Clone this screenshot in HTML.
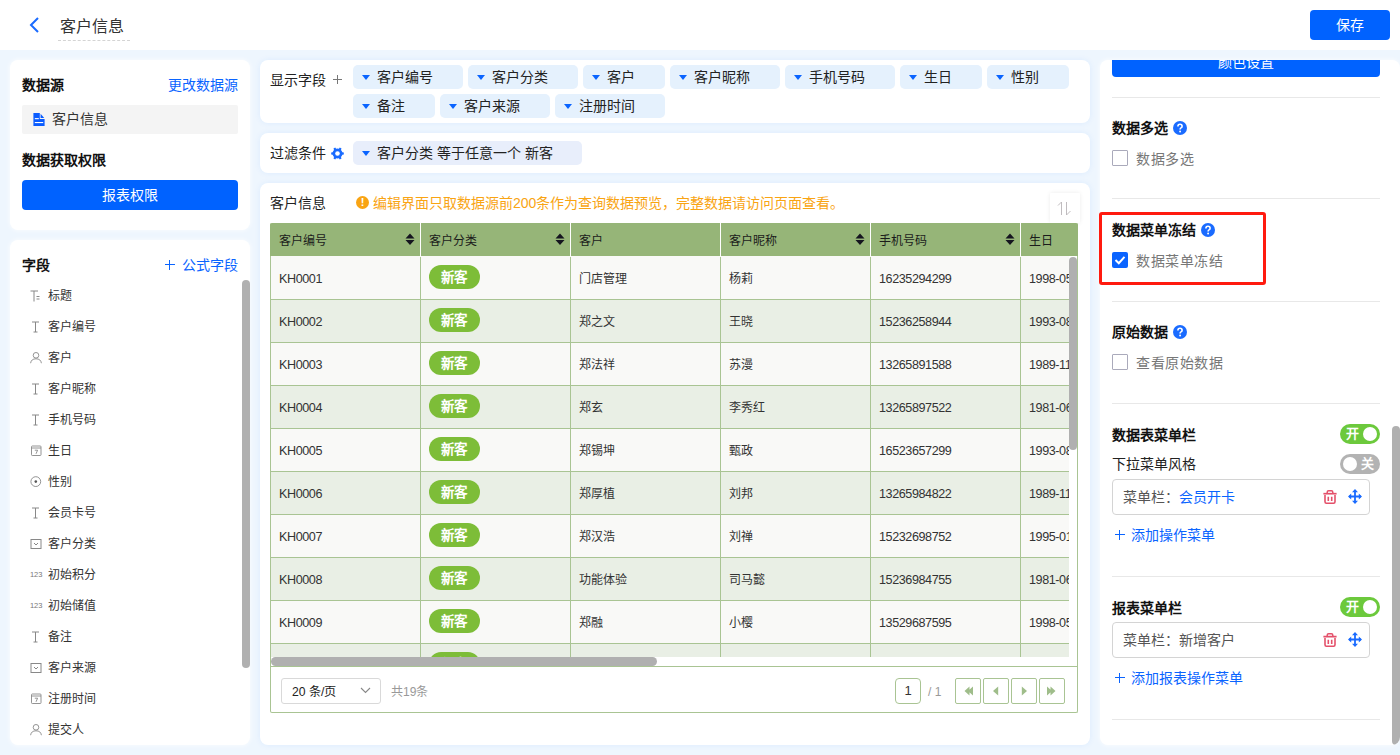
<!DOCTYPE html><html lang="zh-CN"><head><meta charset="utf-8"><style>
*{box-sizing:border-box;margin:0;padding:0}
html,body{width:1400px;height:755px;overflow:hidden}
body{font-family:"Liberation Sans",sans-serif;font-size:13px;color:#333;background:#eef6fe;position:relative}
.abs{position:absolute}
.panel{position:absolute;background:#fff;border-radius:8px;box-shadow:0 0 6px rgba(20,120,250,.08)}
.t{position:absolute;white-space:nowrap;line-height:1}
.b{font-weight:bold;color:#111}
.blue{color:#0a64ff}
.btn{position:absolute;background:#0062ff;color:#fff;border-radius:4px;text-align:center}
.ico{position:absolute}
.tag{position:absolute;height:24px;background:#e5f1fd;border-radius:5px}
.tag .tri{position:absolute;left:9px;top:10px;width:0;height:0;border-left:4.5px solid transparent;border-right:4.5px solid transparent;border-top:5px solid #0a64ff}
.tag span{position:absolute;left:24px;top:4.5px;font-size:14px;line-height:1;white-space:nowrap;color:#222}
.cell{position:absolute;white-space:nowrap;line-height:1;font-size:12px;color:#333}
.pill{position:absolute;width:51px;height:24px;border-radius:12px;background:#7dbd38;color:#fff;font-size:13.5px;font-weight:bold;text-align:center;line-height:25.5px;text-indent:-1px}
.pbtn{position:absolute;width:26px;height:26px;border:1px solid #a9c493;border-radius:2px;background:#fff}
.divr{position:absolute;left:1112px;width:268px;height:1px;background:#e6e6e6}
.cb{position:absolute;width:16px;height:16px;border:1px solid #b9bec7;border-radius:2px;background:#fff}
.qm{position:absolute;width:16px;height:16px;border-radius:50%;background:#1a6bff;color:#fff;font-size:12px;font-weight:bold;text-align:center;line-height:16px}
.tog{position:absolute;width:40px;height:20px;border-radius:10px}
.tog .k{position:absolute;top:3px;width:14px;height:14px;border-radius:50%;background:#fff}
.tog span{position:absolute;top:3px;font-size:13px;color:#fff;line-height:1;font-weight:bold}
</style></head><body>
<div class="abs" style="left:0;top:0;width:1400px;height:50px;background:#fff"></div>
<svg class="ico" style="left:27px;top:16px" width="14" height="18" viewBox="0 0 14 18"><path d="M11 2 L4 9 L11 16" fill="none" stroke="#1a6bff" stroke-width="2"/></svg>
<div class="t" style="left:60px;top:19px;font-size:16px;color:#333">客户信息</div>
<div class="abs" style="left:58px;top:40px;width:72px;border-top:1px dashed #d4d4d4"></div>
<div class="btn" style="left:1310px;top:10px;width:80px;height:30px;line-height:30px;font-size:14px">保存</div>
<div class="panel" style="left:10px;top:60px;width:240px;height:170px;box-shadow:0 0 5px rgba(255,255,255,.9)"></div>
<div class="t b" style="left:22px;top:78px;font-size:14px">数据源</div>
<div class="t blue" style="left:168px;top:78px;font-size:14px">更改数据源</div>
<div class="abs" style="left:22px;top:105px;width:216px;height:29px;background:#f4f4f4;border-radius:2px"></div>
<svg class="ico" style="left:33px;top:113px" width="12" height="13" viewBox="0 0 12 13"><path d="M0.4 0 H6.8 V5.9 H11.6 V13 H0.4 Z M7.6 0.8 L11.2 4.9 H7.6 Z" fill="#0a5cff"/><rect x="1.8" y="5.1" width="4" height="1.1" fill="#fff"/><rect x="1.8" y="9" width="8.4" height="1.1" fill="#fff"/></svg>
<div class="t" style="left:52px;top:112px;font-size:14px">客户信息</div>
<div class="t b" style="left:22px;top:153px;font-size:14px">数据获取权限</div>
<div class="btn" style="left:22px;top:180px;width:216px;height:30px;line-height:30px;font-size:14px">报表权限</div>
<div class="panel" style="left:10px;top:240px;width:240px;height:505px;box-shadow:0 0 5px rgba(255,255,255,.9)"></div>
<div class="t b" style="left:22px;top:258px;font-size:14px">字段</div>
<svg class="ico" style="left:165px;top:260px" width="10" height="10" viewBox="0 0 10 10"><path d="M4.5 0 V10 M0 4.5 H10" stroke="#0a64ff" stroke-width="1"/></svg>
<div class="t blue" style="left:182px;top:258px;font-size:14px">公式字段</div>
<div class="abs" style="left:242px;top:280px;width:8px;height:388px;background:#b0b0b0;border-radius:4px"></div>
<div class="ico" style="left:30px;top:290px;width:14px;height:12px"><svg width="12" height="12" viewBox="0 0 12 12"><path d="M0.5 1 H8 M4 1 V11.5 M6.5 6.5 H9.5 M6.5 9 H9.5" stroke="#888" stroke-width="1" fill="none"/></svg></div>
<div class="t" style="left:48px;top:289.5px;font-size:12px;color:#333">标题</div>
<div class="ico" style="left:30px;top:321px;width:14px;height:12px"><svg width="12" height="12" viewBox="0 0 12 12"><path d="M2 1 H9 M5.5 1 V11 M3.5 11 H7.5" stroke="#888" stroke-width="1" fill="none"/></svg></div>
<div class="t" style="left:48px;top:320.5px;font-size:12px;color:#333">客户编号</div>
<div class="ico" style="left:30px;top:352px;width:14px;height:12px"><svg width="12" height="12" viewBox="0 0 12 12"><circle cx="6" cy="3.3" r="2.8" stroke="#888" stroke-width="0.9" fill="none"/><path d="M0.6 11.2 Q1.2 6.8 6 6.8 Q10.8 6.8 11.4 11.2" stroke="#888" stroke-width="0.9" fill="none"/></svg></div>
<div class="t" style="left:48px;top:351.5px;font-size:12px;color:#333">客户</div>
<div class="ico" style="left:30px;top:383px;width:14px;height:12px"><svg width="12" height="12" viewBox="0 0 12 12"><path d="M2 1 H9 M5.5 1 V11 M3.5 11 H7.5" stroke="#888" stroke-width="1" fill="none"/></svg></div>
<div class="t" style="left:48px;top:382.5px;font-size:12px;color:#333">客户昵称</div>
<div class="ico" style="left:30px;top:414px;width:14px;height:12px"><svg width="12" height="12" viewBox="0 0 12 12"><path d="M2 1 H9 M5.5 1 V11 M3.5 11 H7.5" stroke="#888" stroke-width="1" fill="none"/></svg></div>
<div class="t" style="left:48px;top:413.5px;font-size:12px;color:#333">手机号码</div>
<div class="ico" style="left:30px;top:445px;width:14px;height:12px"><svg width="12" height="12" viewBox="0 0 12 12"><rect x="1.5" y="1" width="9.5" height="9.5" rx="0.8" stroke="#888" stroke-width="0.9" fill="none"/><path d="M1.5 3 H11 M4.8 5.2 H7.6 L6 8.8" stroke="#888" stroke-width="0.9" fill="none"/></svg></div>
<div class="t" style="left:48px;top:444.5px;font-size:12px;color:#333">生日</div>
<div class="ico" style="left:30px;top:476px;width:14px;height:12px"><svg width="12" height="12" viewBox="0 0 12 12"><circle cx="5.8" cy="5.6" r="4.9" stroke="#888" stroke-width="0.9" fill="none"/><circle cx="5.8" cy="5.6" r="1.3" fill="#555"/></svg></div>
<div class="t" style="left:48px;top:475.5px;font-size:12px;color:#333">性别</div>
<div class="ico" style="left:30px;top:507px;width:14px;height:12px"><svg width="12" height="12" viewBox="0 0 12 12"><path d="M2 1 H9 M5.5 1 V11 M3.5 11 H7.5" stroke="#888" stroke-width="1" fill="none"/></svg></div>
<div class="t" style="left:48px;top:506.5px;font-size:12px;color:#333">会员卡号</div>
<div class="ico" style="left:30px;top:538px;width:14px;height:12px"><svg width="12" height="12" viewBox="0 0 12 12"><rect x="1" y="1.5" width="10" height="9" stroke="#888" fill="none"/><path d="M4 5 L6 7 L8 5" stroke="#888" fill="none"/></svg></div>
<div class="t" style="left:48px;top:537.5px;font-size:12px;color:#333">客户分类</div>
<div class="ico" style="left:30px;top:569px;width:14px;height:12px"><div style="font-size:7.5px;color:#777;line-height:12px;letter-spacing:-0.1px">123</div></div>
<div class="t" style="left:48px;top:568.5px;font-size:12px;color:#333">初始积分</div>
<div class="ico" style="left:30px;top:600px;width:14px;height:12px"><div style="font-size:7.5px;color:#777;line-height:12px;letter-spacing:-0.1px">123</div></div>
<div class="t" style="left:48px;top:599.5px;font-size:12px;color:#333">初始储值</div>
<div class="ico" style="left:30px;top:631px;width:14px;height:12px"><svg width="12" height="12" viewBox="0 0 12 12"><path d="M2 1 H9 M5.5 1 V11 M3.5 11 H7.5" stroke="#888" stroke-width="1" fill="none"/></svg></div>
<div class="t" style="left:48px;top:630.5px;font-size:12px;color:#333">备注</div>
<div class="ico" style="left:30px;top:662px;width:14px;height:12px"><svg width="12" height="12" viewBox="0 0 12 12"><rect x="1" y="1.5" width="10" height="9" stroke="#888" fill="none"/><path d="M4 5 L6 7 L8 5" stroke="#888" fill="none"/></svg></div>
<div class="t" style="left:48px;top:661.5px;font-size:12px;color:#333">客户来源</div>
<div class="ico" style="left:30px;top:693px;width:14px;height:12px"><svg width="12" height="12" viewBox="0 0 12 12"><rect x="1.5" y="1" width="9.5" height="9.5" rx="0.8" stroke="#888" stroke-width="0.9" fill="none"/><path d="M1.5 3 H11 M4.8 5.2 H7.6 L6 8.8" stroke="#888" stroke-width="0.9" fill="none"/></svg></div>
<div class="t" style="left:48px;top:692.5px;font-size:12px;color:#333">注册时间</div>
<div class="ico" style="left:30px;top:724px;width:14px;height:12px"><svg width="12" height="12" viewBox="0 0 12 12"><circle cx="6" cy="3.3" r="2.8" stroke="#888" stroke-width="0.9" fill="none"/><path d="M0.6 11.2 Q1.2 6.8 6 6.8 Q10.8 6.8 11.4 11.2" stroke="#888" stroke-width="0.9" fill="none"/></svg></div>
<div class="t" style="left:48px;top:723.5px;font-size:12px;color:#333">提交人</div>
<div class="panel" style="left:260px;top:60px;width:830px;height:63px"></div>
<div class="panel" style="left:260px;top:133px;width:830px;height:40px"></div>
<div class="panel" style="left:260px;top:183px;width:830px;height:562px"></div>
<div class="t" style="left:270px;top:73px;font-size:14px;color:#222">显示字段</div>
<svg class="ico" style="left:333px;top:75px" width="9" height="9" viewBox="0 0 9 9"><path d="M4.5 0 V9 M0 4.5 H9" stroke="#777" stroke-width="1"/></svg>
<div class="tag" style="left:353px;top:65px;width:110px"><i class="tri"></i><span>客户编号</span></div>
<div class="tag" style="left:468px;top:65px;width:110px"><i class="tri"></i><span>客户分类</span></div>
<div class="tag" style="left:583px;top:65px;width:82px"><i class="tri"></i><span>客户</span></div>
<div class="tag" style="left:670px;top:65px;width:110px"><i class="tri"></i><span>客户昵称</span></div>
<div class="tag" style="left:785px;top:65px;width:110px"><i class="tri"></i><span>手机号码</span></div>
<div class="tag" style="left:900px;top:65px;width:82px"><i class="tri"></i><span>生日</span></div>
<div class="tag" style="left:987px;top:65px;width:82px"><i class="tri"></i><span>性别</span></div>
<div class="tag" style="left:353px;top:94px;width:82px"><i class="tri"></i><span>备注</span></div>
<div class="tag" style="left:440px;top:94px;width:110px"><i class="tri"></i><span>客户来源</span></div>
<div class="tag" style="left:555px;top:94px;width:110px"><i class="tri"></i><span>注册时间</span></div>
<div class="t" style="left:270px;top:146px;font-size:14px;color:#222">过滤条件</div>
<svg class="ico" style="left:331px;top:147px" width="13" height="13" viewBox="0 0 13 13"><path d="M10.74 4.05 L11.35 5.29 L12.82 5.50 L12.82 7.50 L11.35 7.71 L10.74 8.95 L9.97 10.10 L10.53 11.47 L8.79 12.47 L7.88 11.31 L6.50 11.40 L5.12 11.31 L4.21 12.47 L2.47 11.47 L3.03 10.10 L2.26 8.95 L1.65 7.71 L0.18 7.50 L0.18 5.50 L1.65 5.29 L2.26 4.05 L3.03 2.90 L2.47 1.53 L4.21 0.53 L5.12 1.69 L6.50 1.60 L7.88 1.69 L8.79 0.53 L10.53 1.53 L9.97 2.90 Z" fill="#1a6bff"/><circle cx="6.5" cy="6.5" r="2.3" fill="#fff"/></svg>
<div class="tag" style="left:353px;top:141px;width:229px;background:#e8eefb"><i class="tri"></i><span>客户分类 等于任意一个 新客</span></div>
<div class="t" style="left:270px;top:196px;font-size:14px;color:#222">客户信息</div>
<div class="abs" style="left:356px;top:196px;width:13px;height:13px;border-radius:50%;background:#f9a413;color:#fff;font-size:11px;font-weight:bold;text-align:center;line-height:13px">!</div>
<div class="t" style="left:373px;top:196px;font-size:14px;color:#f9a413;letter-spacing:0px">编辑界面只取数据源前200条作为查询数据预览，完整数据请访问页面查看。</div>
<div class="abs" style="left:1050px;top:193px;width:30px;height:30px;background:#fff;box-shadow:0 0 4px rgba(0,0,0,.08);border-radius:1px"></div>
<svg class="ico" style="left:1057px;top:201px" width="16" height="15" viewBox="0 0 16 15"><path d="M4.5 14 V1 L1 4.5 M9.5 1 V14 L13.5 10" stroke="#b9b4b8" stroke-width="0.9" fill="none"/></svg>
<div class="abs" style="left:270px;top:223px;width:808px;height:490px;border:1px solid #a9c493;border-top:none;border-radius:2px;background:#fff"></div>
<div class="abs" style="left:270px;top:223px;width:808px;height:33px;background:#96b578;border-radius:2px 2px 0 0"></div>
<div class="cell" style="left:279px;top:234.5px;font-size:12px;color:#1b1b1b">客户编号</div>
<svg class="ico" style="left:405px;top:233px" width="10" height="13" viewBox="0 0 10 13"><path d="M5 0.5 L9.5 5.5 H0.5 Z M0.5 7 H9.5 L5 12 Z" fill="#15151f"/></svg>
<div class="cell" style="left:429px;top:234.5px;font-size:12px;color:#1b1b1b">客户分类</div>
<svg class="ico" style="left:555px;top:233px" width="10" height="13" viewBox="0 0 10 13"><path d="M5 0.5 L9.5 5.5 H0.5 Z M0.5 7 H9.5 L5 12 Z" fill="#15151f"/></svg>
<div class="abs" style="left:420px;top:223px;width:1px;height:33px;background:#fff"></div>
<div class="cell" style="left:579px;top:234.5px;font-size:12px;color:#1b1b1b">客户</div>
<div class="abs" style="left:570px;top:223px;width:1px;height:33px;background:#fff"></div>
<div class="cell" style="left:729px;top:234.5px;font-size:12px;color:#1b1b1b">客户昵称</div>
<svg class="ico" style="left:855px;top:233px" width="10" height="13" viewBox="0 0 10 13"><path d="M5 0.5 L9.5 5.5 H0.5 Z M0.5 7 H9.5 L5 12 Z" fill="#15151f"/></svg>
<div class="abs" style="left:720px;top:223px;width:1px;height:33px;background:#fff"></div>
<div class="cell" style="left:879px;top:234.5px;font-size:12px;color:#1b1b1b">手机号码</div>
<svg class="ico" style="left:1005px;top:233px" width="10" height="13" viewBox="0 0 10 13"><path d="M5 0.5 L9.5 5.5 H0.5 Z M0.5 7 H9.5 L5 12 Z" fill="#15151f"/></svg>
<div class="abs" style="left:870px;top:223px;width:1px;height:33px;background:#fff"></div>
<div class="cell" style="left:1029px;top:234.5px;font-size:12px;color:#1b1b1b">生日</div>
<div class="abs" style="left:1020px;top:223px;width:1px;height:33px;background:#fff"></div>
<div class="abs" style="left:271px;top:256px;width:798px;height:401px;overflow:hidden">
<div class="abs" style="left:0;top:0px;width:900px;height:44px;background:#f9f9f7;border-bottom:1px solid #a9c493"></div>
<div class="cell" style="left:8px;top:17px;font-size:12.6px;letter-spacing:-0.42px">KH0001</div>
<div class="abs" style="left:149px;top:1px;width:1px;height:43px;background:#a9c493"></div>
<div class="pill" style="left:158px;top:9px">新客</div>
<div class="abs" style="left:299px;top:1px;width:1px;height:43px;background:#a9c493"></div>
<div class="cell" style="left:308px;top:17px;font-size:12px">门店管理</div>
<div class="abs" style="left:449px;top:1px;width:1px;height:43px;background:#a9c493"></div>
<div class="cell" style="left:458px;top:17px;font-size:12px">杨莉</div>
<div class="abs" style="left:599px;top:1px;width:1px;height:43px;background:#a9c493"></div>
<div class="cell" style="left:608px;top:17px;font-size:12.6px;letter-spacing:-0.42px">16235294299</div>
<div class="abs" style="left:749px;top:1px;width:1px;height:43px;background:#a9c493"></div>
<div class="cell" style="left:758px;top:17px;font-size:12.6px;letter-spacing:-0.42px">1998-05-</div>
<div class="abs" style="left:0;top:44px;width:900px;height:43px;background:#e9efe5;border-bottom:1px solid #a9c493"></div>
<div class="cell" style="left:8px;top:60px;font-size:12.6px;letter-spacing:-0.42px">KH0002</div>
<div class="abs" style="left:149px;top:44px;width:1px;height:43px;background:#a9c493"></div>
<div class="pill" style="left:158px;top:52px">新客</div>
<div class="abs" style="left:299px;top:44px;width:1px;height:43px;background:#a9c493"></div>
<div class="cell" style="left:308px;top:60px;font-size:12px">郑之文</div>
<div class="abs" style="left:449px;top:44px;width:1px;height:43px;background:#a9c493"></div>
<div class="cell" style="left:458px;top:60px;font-size:12px">王晓</div>
<div class="abs" style="left:599px;top:44px;width:1px;height:43px;background:#a9c493"></div>
<div class="cell" style="left:608px;top:60px;font-size:12.6px;letter-spacing:-0.42px">15236258944</div>
<div class="abs" style="left:749px;top:44px;width:1px;height:43px;background:#a9c493"></div>
<div class="cell" style="left:758px;top:60px;font-size:12.6px;letter-spacing:-0.42px">1993-08-</div>
<div class="abs" style="left:0;top:87px;width:900px;height:43px;background:#f9f9f7;border-bottom:1px solid #a9c493"></div>
<div class="cell" style="left:8px;top:103px;font-size:12.6px;letter-spacing:-0.42px">KH0003</div>
<div class="abs" style="left:149px;top:87px;width:1px;height:43px;background:#a9c493"></div>
<div class="pill" style="left:158px;top:95px">新客</div>
<div class="abs" style="left:299px;top:87px;width:1px;height:43px;background:#a9c493"></div>
<div class="cell" style="left:308px;top:103px;font-size:12px">郑法祥</div>
<div class="abs" style="left:449px;top:87px;width:1px;height:43px;background:#a9c493"></div>
<div class="cell" style="left:458px;top:103px;font-size:12px">苏漫</div>
<div class="abs" style="left:599px;top:87px;width:1px;height:43px;background:#a9c493"></div>
<div class="cell" style="left:608px;top:103px;font-size:12.6px;letter-spacing:-0.42px">13265891588</div>
<div class="abs" style="left:749px;top:87px;width:1px;height:43px;background:#a9c493"></div>
<div class="cell" style="left:758px;top:103px;font-size:12.6px;letter-spacing:-0.42px">1989-11-</div>
<div class="abs" style="left:0;top:130px;width:900px;height:43px;background:#e9efe5;border-bottom:1px solid #a9c493"></div>
<div class="cell" style="left:8px;top:146px;font-size:12.6px;letter-spacing:-0.42px">KH0004</div>
<div class="abs" style="left:149px;top:130px;width:1px;height:43px;background:#a9c493"></div>
<div class="pill" style="left:158px;top:138px">新客</div>
<div class="abs" style="left:299px;top:130px;width:1px;height:43px;background:#a9c493"></div>
<div class="cell" style="left:308px;top:146px;font-size:12px">郑玄</div>
<div class="abs" style="left:449px;top:130px;width:1px;height:43px;background:#a9c493"></div>
<div class="cell" style="left:458px;top:146px;font-size:12px">李秀红</div>
<div class="abs" style="left:599px;top:130px;width:1px;height:43px;background:#a9c493"></div>
<div class="cell" style="left:608px;top:146px;font-size:12.6px;letter-spacing:-0.42px">13265897522</div>
<div class="abs" style="left:749px;top:130px;width:1px;height:43px;background:#a9c493"></div>
<div class="cell" style="left:758px;top:146px;font-size:12.6px;letter-spacing:-0.42px">1981-06-</div>
<div class="abs" style="left:0;top:173px;width:900px;height:43px;background:#f9f9f7;border-bottom:1px solid #a9c493"></div>
<div class="cell" style="left:8px;top:189px;font-size:12.6px;letter-spacing:-0.42px">KH0005</div>
<div class="abs" style="left:149px;top:173px;width:1px;height:43px;background:#a9c493"></div>
<div class="pill" style="left:158px;top:181px">新客</div>
<div class="abs" style="left:299px;top:173px;width:1px;height:43px;background:#a9c493"></div>
<div class="cell" style="left:308px;top:189px;font-size:12px">郑锡坤</div>
<div class="abs" style="left:449px;top:173px;width:1px;height:43px;background:#a9c493"></div>
<div class="cell" style="left:458px;top:189px;font-size:12px">甄政</div>
<div class="abs" style="left:599px;top:173px;width:1px;height:43px;background:#a9c493"></div>
<div class="cell" style="left:608px;top:189px;font-size:12.6px;letter-spacing:-0.42px">16523657299</div>
<div class="abs" style="left:749px;top:173px;width:1px;height:43px;background:#a9c493"></div>
<div class="cell" style="left:758px;top:189px;font-size:12.6px;letter-spacing:-0.42px">1993-08-</div>
<div class="abs" style="left:0;top:216px;width:900px;height:43px;background:#e9efe5;border-bottom:1px solid #a9c493"></div>
<div class="cell" style="left:8px;top:232px;font-size:12.6px;letter-spacing:-0.42px">KH0006</div>
<div class="abs" style="left:149px;top:216px;width:1px;height:43px;background:#a9c493"></div>
<div class="pill" style="left:158px;top:224px">新客</div>
<div class="abs" style="left:299px;top:216px;width:1px;height:43px;background:#a9c493"></div>
<div class="cell" style="left:308px;top:232px;font-size:12px">郑厚植</div>
<div class="abs" style="left:449px;top:216px;width:1px;height:43px;background:#a9c493"></div>
<div class="cell" style="left:458px;top:232px;font-size:12px">刘邦</div>
<div class="abs" style="left:599px;top:216px;width:1px;height:43px;background:#a9c493"></div>
<div class="cell" style="left:608px;top:232px;font-size:12.6px;letter-spacing:-0.42px">13265984822</div>
<div class="abs" style="left:749px;top:216px;width:1px;height:43px;background:#a9c493"></div>
<div class="cell" style="left:758px;top:232px;font-size:12.6px;letter-spacing:-0.42px">1989-11-</div>
<div class="abs" style="left:0;top:259px;width:900px;height:43px;background:#f9f9f7;border-bottom:1px solid #a9c493"></div>
<div class="cell" style="left:8px;top:275px;font-size:12.6px;letter-spacing:-0.42px">KH0007</div>
<div class="abs" style="left:149px;top:259px;width:1px;height:43px;background:#a9c493"></div>
<div class="pill" style="left:158px;top:267px">新客</div>
<div class="abs" style="left:299px;top:259px;width:1px;height:43px;background:#a9c493"></div>
<div class="cell" style="left:308px;top:275px;font-size:12px">郑汉浩</div>
<div class="abs" style="left:449px;top:259px;width:1px;height:43px;background:#a9c493"></div>
<div class="cell" style="left:458px;top:275px;font-size:12px">刘禅</div>
<div class="abs" style="left:599px;top:259px;width:1px;height:43px;background:#a9c493"></div>
<div class="cell" style="left:608px;top:275px;font-size:12.6px;letter-spacing:-0.42px">15232698752</div>
<div class="abs" style="left:749px;top:259px;width:1px;height:43px;background:#a9c493"></div>
<div class="cell" style="left:758px;top:275px;font-size:12.6px;letter-spacing:-0.42px">1995-01-</div>
<div class="abs" style="left:0;top:302px;width:900px;height:43px;background:#e9efe5;border-bottom:1px solid #a9c493"></div>
<div class="cell" style="left:8px;top:318px;font-size:12.6px;letter-spacing:-0.42px">KH0008</div>
<div class="abs" style="left:149px;top:302px;width:1px;height:43px;background:#a9c493"></div>
<div class="pill" style="left:158px;top:310px">新客</div>
<div class="abs" style="left:299px;top:302px;width:1px;height:43px;background:#a9c493"></div>
<div class="cell" style="left:308px;top:318px;font-size:12px">功能体验</div>
<div class="abs" style="left:449px;top:302px;width:1px;height:43px;background:#a9c493"></div>
<div class="cell" style="left:458px;top:318px;font-size:12px">司马懿</div>
<div class="abs" style="left:599px;top:302px;width:1px;height:43px;background:#a9c493"></div>
<div class="cell" style="left:608px;top:318px;font-size:12.6px;letter-spacing:-0.42px">15236984755</div>
<div class="abs" style="left:749px;top:302px;width:1px;height:43px;background:#a9c493"></div>
<div class="cell" style="left:758px;top:318px;font-size:12.6px;letter-spacing:-0.42px">1981-06-</div>
<div class="abs" style="left:0;top:345px;width:900px;height:43px;background:#f9f9f7;border-bottom:1px solid #a9c493"></div>
<div class="cell" style="left:8px;top:361px;font-size:12.6px;letter-spacing:-0.42px">KH0009</div>
<div class="abs" style="left:149px;top:345px;width:1px;height:43px;background:#a9c493"></div>
<div class="pill" style="left:158px;top:353px">新客</div>
<div class="abs" style="left:299px;top:345px;width:1px;height:43px;background:#a9c493"></div>
<div class="cell" style="left:308px;top:361px;font-size:12px">郑融</div>
<div class="abs" style="left:449px;top:345px;width:1px;height:43px;background:#a9c493"></div>
<div class="cell" style="left:458px;top:361px;font-size:12px">小樱</div>
<div class="abs" style="left:599px;top:345px;width:1px;height:43px;background:#a9c493"></div>
<div class="cell" style="left:608px;top:361px;font-size:12.6px;letter-spacing:-0.42px">13529687595</div>
<div class="abs" style="left:749px;top:345px;width:1px;height:43px;background:#a9c493"></div>
<div class="cell" style="left:758px;top:361px;font-size:12.6px;letter-spacing:-0.42px">1998-05-</div>
<div class="abs" style="left:0;top:388px;width:900px;height:43px;background:#e9efe5;border-bottom:1px solid #a9c493"></div>
<div class="abs" style="left:149px;top:388px;width:1px;height:43px;background:#a9c493"></div>
<div class="pill" style="left:158px;top:396px">新客</div>
<div class="abs" style="left:299px;top:388px;width:1px;height:43px;background:#a9c493"></div>
<div class="abs" style="left:449px;top:388px;width:1px;height:43px;background:#a9c493"></div>
<div class="abs" style="left:599px;top:388px;width:1px;height:43px;background:#a9c493"></div>
<div class="abs" style="left:749px;top:388px;width:1px;height:43px;background:#a9c493"></div>
</div>
<div class="abs" style="left:271px;top:657px;width:386px;height:9px;background:#b0b0b0;border-radius:5px"></div>
<div class="abs" style="left:1069px;top:257px;width:8px;height:193px;background:#b0b0b0;border-radius:4px"></div>
<div class="abs" style="left:270px;top:666px;width:808px;height:1px;background:#a9c493"></div>
<div class="abs" style="left:281px;top:678px;width:100px;height:26px;border:1px solid #d9d9d9;border-radius:3px;background:#fff"></div>
<div class="t" style="left:292px;top:686px;font-size:12.2px;color:#222">20 条/页</div>
<svg class="ico" style="left:360px;top:687px" width="11" height="7" viewBox="0 0 11 7"><path d="M1 1 L5.5 5.5 L10 1" stroke="#888" stroke-width="1.1" fill="none"/></svg>
<div class="t" style="left:391px;top:686px;font-size:12px;color:#999">共19条</div>
<div class="pbtn" style="left:895px;top:678px;width:26px;height:26px;font-size:13px;text-align:center;line-height:24px;color:#333;border-radius:4px">1</div>
<div class="t" style="left:928px;top:686px;font-size:12px;color:#999">/ 1</div>
<div class="pbtn" style="left:955px;top:678px;width:26px;height:26px"><svg class="ico" style="left:5px;top:5px" width="14" height="14" viewBox="0 0 14 14"><path d="M8.5 2.5 L3.5 7 L8.5 11.5 Z M12 2.5 L7 7 L12 11.5 Z" fill="#9fbd8a"/></svg></div>
<div class="pbtn" style="left:983px;top:678px;width:26px;height:26px"><svg class="ico" style="left:5px;top:5px" width="14" height="14" viewBox="0 0 14 14"><path d="M9.2 2.5 L4 7 L9.2 11.5 Z" fill="#9fbd8a"/></svg></div>
<div class="pbtn" style="left:1011px;top:678px;width:26px;height:26px"><svg class="ico" style="left:5px;top:5px" width="14" height="14" viewBox="0 0 14 14"><path d="M4.8 2.5 L10 7 L4.8 11.5 Z" fill="#9fbd8a"/></svg></div>
<div class="pbtn" style="left:1039px;top:678px;width:26px;height:26px"><svg class="ico" style="left:5px;top:5px" width="14" height="14" viewBox="0 0 14 14"><path d="M2 2.5 L7 7 L2 11.5 Z M5.5 2.5 L10.5 7 L5.5 11.5 Z" fill="#9fbd8a"/></svg></div>
<div class="panel" style="left:1100px;top:60px;width:300px;height:685px;border-radius:8px;box-shadow:0 0 5px rgba(255,255,255,.9)"></div>
<div class="abs" style="left:1100px;top:60px;width:300px;height:685px;overflow:hidden;border-radius:8px">
<div class="btn" style="left:12px;top:-13px;width:268px;height:30px;line-height:30px;font-size:14px">颜色设置</div>
<div class="abs" style="left:12px;top:37px;width:268px;height:1px;background:#e8e8e8"></div>
<div class="abs" style="left:12px;top:138px;width:268px;height:1px;background:#e8e8e8"></div>
<div class="abs" style="left:12px;top:241px;width:268px;height:1px;background:#e8e8e8"></div>
<div class="abs" style="left:12px;top:343px;width:268px;height:1px;background:#e8e8e8"></div>
<div class="abs" style="left:12px;top:516px;width:268px;height:1px;background:#e8e8e8"></div>
<div class="abs" style="left:12px;top:659px;width:268px;height:1px;background:#e8e8e8"></div>
<div class="t b" style="left:12px;top:61px;font-size:14px">数据多选</div>
<svg class="ico" style="left:73px;top:61px" width="14" height="14" viewBox="0 0 14 14"><circle cx="7" cy="7" r="7" fill="#1a6bff"/><path d="M4.9 5.4 Q4.9 3.3 7 3.3 Q9.1 3.3 9.1 5.2 Q9.1 6.3 8 6.9 Q7.1 7.4 7.1 8.4" stroke="#fff" stroke-width="1.6" fill="none"/><circle cx="7.1" cy="10.5" r="0.95" fill="#fff"/></svg>
<div class="abs" style="left:12px;top:90px;width:16px;height:16px;border:1px solid #aaaabb;border-radius:1px;background:#fff"></div>
<div class="t" style="left:36px;top:92px;font-size:14px;color:#777;letter-spacing:0.55px">数据多选</div>
<div class="t b" style="left:12px;top:163px;font-size:14px">数据菜单冻结</div>
<svg class="ico" style="left:101px;top:163px" width="14" height="14" viewBox="0 0 14 14"><circle cx="7" cy="7" r="7" fill="#1a6bff"/><path d="M4.9 5.4 Q4.9 3.3 7 3.3 Q9.1 3.3 9.1 5.2 Q9.1 6.3 8 6.9 Q7.1 7.4 7.1 8.4" stroke="#fff" stroke-width="1.6" fill="none"/><circle cx="7.1" cy="10.5" r="0.95" fill="#fff"/></svg>
<div class="abs" style="left:12px;top:192px;width:16px;height:16px;background:#0a64ff;border-radius:2px"><svg class="ico" style="left:2px;top:2px" width="12" height="12" viewBox="0 0 12 12"><path d="M1.5 6 L4.8 9.2 L10.5 2.8" stroke="#fff" stroke-width="2" fill="none"/></svg></div>
<div class="t" style="left:36px;top:194px;font-size:14px;color:#777;letter-spacing:0.55px">数据菜单冻结</div>
<div class="t b" style="left:12px;top:265px;font-size:14px">原始数据</div>
<svg class="ico" style="left:73px;top:265px" width="14" height="14" viewBox="0 0 14 14"><circle cx="7" cy="7" r="7" fill="#1a6bff"/><path d="M4.9 5.4 Q4.9 3.3 7 3.3 Q9.1 3.3 9.1 5.2 Q9.1 6.3 8 6.9 Q7.1 7.4 7.1 8.4" stroke="#fff" stroke-width="1.6" fill="none"/><circle cx="7.1" cy="10.5" r="0.95" fill="#fff"/></svg>
<div class="abs" style="left:12px;top:294px;width:16px;height:16px;border:1px solid #aaaabb;border-radius:1px;background:#fff"></div>
<div class="t" style="left:36px;top:296px;font-size:14px;color:#777;letter-spacing:0.55px">查看原始数据</div>
<div class="t b" style="left:12px;top:368px;font-size:14px">数据表菜单栏</div>
<div class="tog" style="left:240px;top:364px;background:#6cc93c"><span style="left:6px">开</span><i class="k" style="left:23px"></i></div>
<div class="t" style="left:12px;top:397px;font-size:14px;color:#222">下拉菜单风格</div>
<div class="tog" style="left:240px;top:394px;background:#b3b3b3"><i class="k" style="left:3px"></i><span style="left:21px">关</span></div>
<div class="abs" style="left:12px;top:419px;width:258px;height:36px;border:1px solid #d4d4d4;border-radius:4px;background:#fff"></div><div class="t" style="left:23px;top:430px;font-size:14px;color:#555">菜单栏：<span style="color:#0a64ff">会员开卡</span></div><svg class="ico" style="left:223px;top:430px" width="14" height="14" viewBox="0 0 14 14"><path d="M4.2 3.2 V2.2 Q4.2 0.8 5.6 0.8 H8.4 Q9.8 0.8 9.8 2.2 V3.2" stroke="#e4506a" stroke-width="1.5" fill="none"/><path d="M0.4 3.7 H13.6" stroke="#e4506a" stroke-width="1.7"/><path d="M2 5 V11.8 Q2 13.2 3.4 13.2 H10.6 Q12 13.2 12 11.8 V5" stroke="#e4506a" stroke-width="1.6" fill="none"/><path d="M5.3 6.8 V11 M8.7 6.8 V11" stroke="#e4506a" stroke-width="1.6"/></svg><svg class="ico" style="left:248px;top:429px" width="14" height="15" viewBox="0 0 14 15"><path d="M7 1 V14 M1 7.5 H13" stroke="#1a6bff" stroke-width="1.8"/><path d="M7 0 L10 3.2 H4 Z M7 15 L10 11.8 H4 Z M0 7.5 L3.2 4.5 V10.5 Z M14 7.5 L10.8 4.5 V10.5 Z" fill="#1a6bff"/></svg>
<svg class="ico" style="left:15px;top:470px" width="10" height="10" viewBox="0 0 10 10"><path d="M4.5 0 V10 M0 4.5 H10" stroke="#0a64ff" stroke-width="1"/></svg>
<div class="t blue" style="left:31px;top:468px;font-size:14px">添加操作菜单</div>
<div class="t b" style="left:12px;top:541px;font-size:14px">报表菜单栏</div>
<div class="tog" style="left:240px;top:537px;background:#6cc93c"><span style="left:6px">开</span><i class="k" style="left:23px"></i></div>
<div class="abs" style="left:12px;top:562px;width:258px;height:36px;border:1px solid #d4d4d4;border-radius:4px;background:#fff"></div><div class="t" style="left:23px;top:573px;font-size:14px;color:#555">菜单栏：<span style="color:#555">新增客户</span></div><svg class="ico" style="left:223px;top:573px" width="14" height="14" viewBox="0 0 14 14"><path d="M4.2 3.2 V2.2 Q4.2 0.8 5.6 0.8 H8.4 Q9.8 0.8 9.8 2.2 V3.2" stroke="#e4506a" stroke-width="1.5" fill="none"/><path d="M0.4 3.7 H13.6" stroke="#e4506a" stroke-width="1.7"/><path d="M2 5 V11.8 Q2 13.2 3.4 13.2 H10.6 Q12 13.2 12 11.8 V5" stroke="#e4506a" stroke-width="1.6" fill="none"/><path d="M5.3 6.8 V11 M8.7 6.8 V11" stroke="#e4506a" stroke-width="1.6"/></svg><svg class="ico" style="left:248px;top:572px" width="14" height="15" viewBox="0 0 14 15"><path d="M7 1 V14 M1 7.5 H13" stroke="#1a6bff" stroke-width="1.8"/><path d="M7 0 L10 3.2 H4 Z M7 15 L10 11.8 H4 Z M0 7.5 L3.2 4.5 V10.5 Z M14 7.5 L10.8 4.5 V10.5 Z" fill="#1a6bff"/></svg>
<svg class="ico" style="left:15px;top:613px" width="10" height="10" viewBox="0 0 10 10"><path d="M4.5 0 V10 M0 4.5 H10" stroke="#0a64ff" stroke-width="1"/></svg>
<div class="t blue" style="left:31px;top:611px;font-size:14px">添加报表操作菜单</div>
<div class="abs" style="left:292px;top:366px;width:8px;height:319px;background:#b0b0b0;border-radius:4px"></div>
</div>
<div class="abs" style="left:1099px;top:212px;width:167px;height:73px;border:3px solid #ff1a0f;border-radius:3px"></div>
</body></html>
